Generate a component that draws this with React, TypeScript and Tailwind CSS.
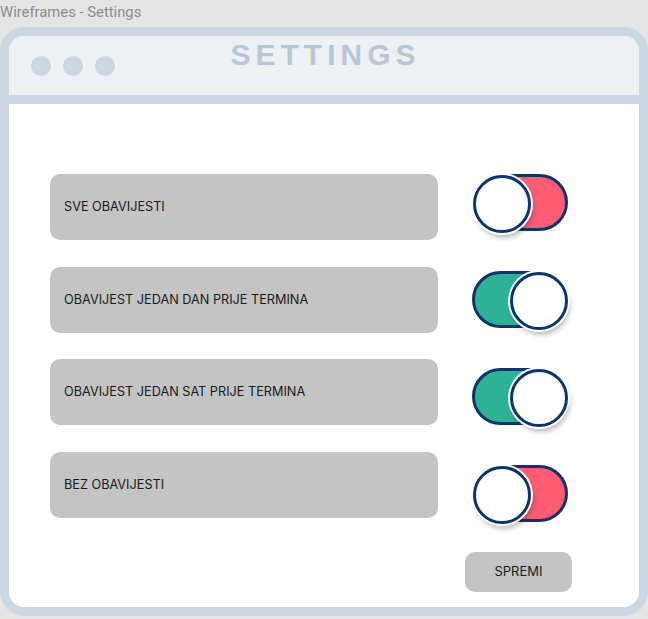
import React from "react"

type Row = { label: string; on: boolean }

const rows: Row[] = [
  { label: "SVE OBAVIJESTI", on: false },
  { label: "OBAVIJEST JEDAN DAN PRIJE TERMINA", on: true },
  { label: "OBAVIJEST JEDAN SAT PRIJE TERMINA", on: true },
  { label: "BEZ OBAVIJESTI", on: false },
]

function Toggle({ on }: { on: boolean }) {
  return (
    <div className="relative w-[98px] h-[62px]">
      <div
        className={`absolute top-[1px] left-0 w-[96px] h-[57px] rounded-full border-[3px] border-[#0c3570] ${
          on ? "bg-[#2db393]" : "bg-[#ff5b73]"
        }`}
      ></div>
      <div
        className={`absolute top-[2px] ${
          on ? "left-[38px]" : "left-[1px]"
        } w-[58px] h-[58px] rounded-full bg-white border-[3px] border-[#0c3570] shadow-[0_0_0_2px_#fff,2px_5px_5px_rgba(0,0,0,0.25)]`}
      ></div>
    </div>
  )
}

export default function App() {
  return (
    <div className="w-[648px] h-[619px] bg-[#e5e5e5] flex flex-col overflow-hidden font-['Inter',sans-serif]">
      <div className="h-[27px] pt-[5px] text-[14.8px] leading-none text-[#8c8c8c] font-['Roboto',sans-serif]">
        Wireframes - Settings
      </div>

      <div className="w-[648px] h-[589px] border-[9px] border-[#cbd7e2] rounded-[24px] bg-white flex flex-col overflow-hidden">
        <div className="h-[68px] bg-[#edf1f4] border-b-[9px] border-[#cbd7e2] grid grid-cols-[1fr_auto_1fr]">
          <div className="flex items-center gap-[12px] pl-[22px]">
            <div className="w-[20px] h-[20px] rounded-full bg-[#cbd7e2]"></div>
            <div className="w-[20px] h-[20px] rounded-full bg-[#cbd7e2]"></div>
            <div className="w-[20px] h-[20px] rounded-full bg-[#cbd7e2]"></div>
          </div>
          <div className="pt-[4px] pl-[3px] text-[30px] leading-[30px] font-bold tracking-[5px] text-[#bac6d4] font-['Liberation_Sans',sans-serif]">
            SETTINGS
          </div>
          <div></div>
        </div>

        <div className="flex gap-[34px] pl-[41px] pt-[69px]">
          <div className="flex flex-col gap-[26.5px] pt-[1px]">
            {rows.map((r) => (
              <div
                key={r.label}
                className="w-[388px] h-[66px] rounded-[10px] bg-[#c4c4c4] flex items-center pl-[14px] text-[12.7px] text-[#1a1a1a]"
              >
                {r.label}
              </div>
            ))}
          </div>

          <div className="flex flex-col items-start gap-[35px]">
            {rows.map((r) => (
              <Toggle key={r.label} on={r.on} />
            ))}
            <button className="-mt-[9px] -ml-[7px] w-[107px] h-[40px] rounded-[10px] bg-[#c4c4c4] text-[13px] text-[#1a1a1a]">
              SPREMI
            </button>
          </div>
        </div>
      </div>
    </div>
  )
}
